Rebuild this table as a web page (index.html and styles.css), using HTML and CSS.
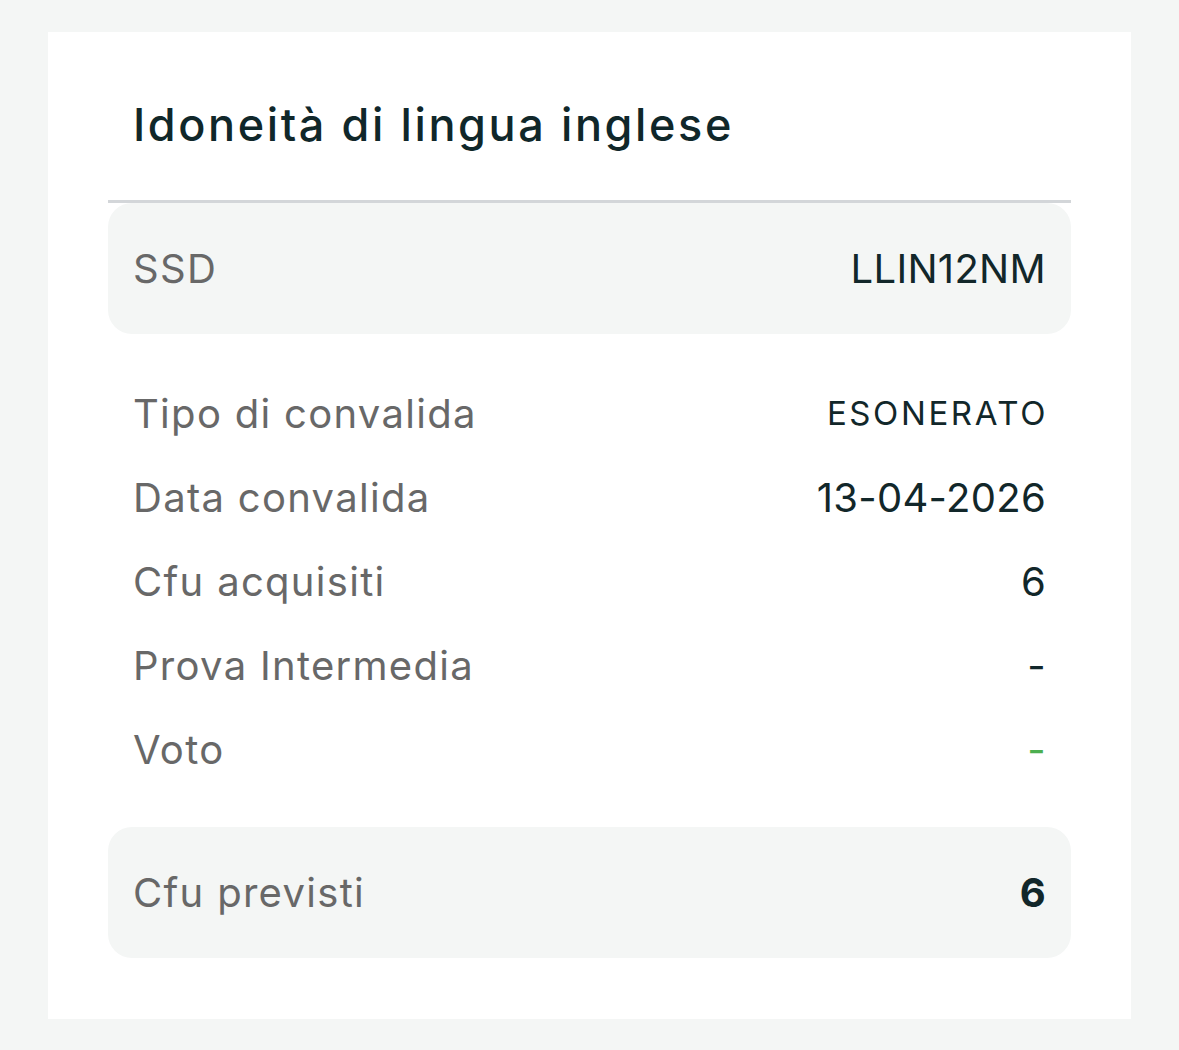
FILE: index.html
```html
<!DOCTYPE html>
<html>
    <head>
        <link rel="stylesheet" href="styles.css">
    </head>
    <body>
        <div class="card">
            <div class="header">
                <h1>Idoneità di lingua inglese</h1>
            </div>
            <div class="box">
                <span class="label">SSD</span>
                <span class="value">LLIN12NM</span>
            </div>
            <div class="details">
                <div class="row">
                    <span class="label">Tipo di convalida</span>
                    <span class="value small">ESONERATO</span>
                </div>
                <div class="row">
                    <span class="label">Data convalida</span>
                    <span class="value">13-04-2026</span>
                </div>
                <div class="row">
                    <span class="label">Cfu acquisiti</span>
                    <span class="value">6</span>
                </div>
                <div class="row">
                    <span class="label">Prova Intermedia</span>
                    <span class="value">-</span>
                </div>
                <div class="row">
                    <span class="label">Voto</span>
                    <span class="value green">-</span>
                </div>
            </div>
            <div class="box">
                <span class="label">Cfu previsti</span>
                <span class="value bold">6</span>
            </div>
        </div>
    </body>
</html>
```

FILE: styles.css
```css
body {
    margin: 0;
    padding: 32px 48px 31px 48px;
    background-color: #f4f6f5;
    font-family: 'Inter', sans-serif;
}
.card {
    background-color: #ffffff;
    padding: 0 60px 61px 60px;
}
.header {
    height: 168px;
    border-bottom: 3px solid #d3d6d9;
    display: flex;
    align-items: center;
    padding: 0 25px;
}
h1 {
    margin: 0;
    padding-top: 16px;
    color: #10272a;
    font-size: 45px;
    font-weight: 500;
    letter-spacing: 2.6px;
}
.box {
    display: flex;
    align-items: center;
    justify-content: space-between;
    height: 131px;
    padding: 0 25px 0 25px;
    background-color: #f4f6f5;
    border-radius: 24px;
}
.details {
    padding: 37px 0 36px 0;
}
.row {
    display: flex;
    align-items: center;
    justify-content: space-between;
    height: 84px;
    padding: 0 25px 0 25px;
}
.label {
    color: #686868;
    font-size: 40px;
    font-weight: 400;
    letter-spacing: 1.3px;
}
.value {
    color: #12272a;
    font-size: 40px;
    font-weight: 400;
    letter-spacing: 0.3px;
}
.value.small {
    font-size: 33px;
    letter-spacing: 2.6px;
    margin-right: -2px;
}
.value.green {
    color: #4caf50;
}
.value.bold {
    font-weight: 700;
}
```
